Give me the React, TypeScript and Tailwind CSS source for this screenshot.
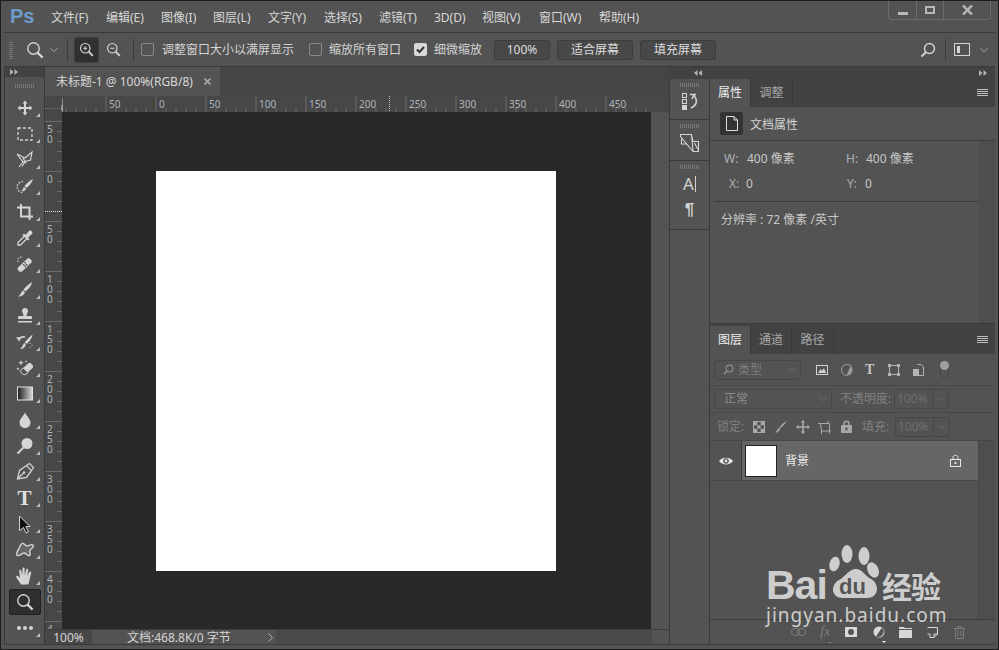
import React from "react";

const C = "#d4d4d4";

function Ic({ s = 20, children, vb = 20 }: { s?: number; vb?: number; children: React.ReactNode }) {
  return (
    <svg width={s} height={s} viewBox={`0 0 ${vb} ${vb}`} fill="none" className="block shrink-0">
      {children}
    </svg>
  );
}

function ZoomIcon({ mark, s = 18 }: { mark?: "+" | "-"; s?: number }) {
  return (
    <Ic s={s} vb={18}>
      <circle cx="7.5" cy="7.5" r="5.7" stroke={C} strokeWidth="1.4" />
      <path d="M11.6 11.6 L16.6 16.6" stroke={C} strokeWidth="2.2" />
      {mark && <path d="M5 7.5 H10" stroke={C} strokeWidth="1.2" />}
      {mark === "+" && <path d="M7.5 5 V10" stroke={C} strokeWidth="1.2" />}
    </Ic>
  );
}

const tools: React.ReactNode[] = [
  <Ic key="move"><path d="M10 2.5 L12.6 5.4 H11 V9 H14.6 V7.4 L17.5 10 L14.6 12.6 V11 H11 V14.6 H12.6 L10 17.5 L7.4 14.6 H9 V11 H5.4 V12.6 L2.5 10 L5.4 7.4 V9 H9 V5.4 H7.4 Z" fill={C} /></Ic>,
  <Ic key="marquee"><rect x="3" y="4" width="14" height="12" stroke={C} strokeWidth="1.3" strokeDasharray="3 2" /></Ic>,
  <Ic key="lasso"><path d="M2 4 L10 8 L17 2 L15.5 10 L8 12 L2 4 M8 12 L4 17 M10 11.5 L7 16.5 M8 8 L11 13.5" stroke={C} strokeWidth="1.2" /></Ic>,
  <Ic key="quick">
    <path d="M8 5.5 A5.5 5.5 0 1 0 7.5 16.5" stroke={C} strokeWidth="1.4" strokeDasharray="1.5 1.5" />
    <path d="M18 3 C17 7 14 10 11.5 12 L9.5 10 C12 7 15 4.5 18 3 Z M9 10.8 L11 12.7 C10 15 8 15.5 6.5 15 C8 14 8 12 9 10.8 Z" fill={C} />
  </Ic>,
  <Ic key="crop"><path d="M2 5.5 H14.5 V14.5 H6 V2 M14.5 14.5 V18 M14.5 14.5 H18" stroke={C} strokeWidth="2" /></Ic>,
  <Ic key="dropper"><path d="M3 17 L3 14.5 L10 7.5 L12.5 10 L5.5 17 Z" stroke={C} strokeWidth="1.3" /><path d="M9 5.5 L10.5 7 L14 3 C15.5 1.5 18.5 4.5 17 6 L13 9.5 L14.5 11 L13 12.5 L7.5 7 Z" fill={C} /></Ic>,
  <Ic key="heal">
    <path d="M3 13.5 L12.5 4.5 C14 3 18 6.5 16.5 8.5 L7 17.5 C5 19 1.5 15.5 3 13.5 Z" fill={C} />
    <path d="M8 10 h1.5 v1.5 h-1.5 z M11 10 h1.5 v1.5 h-1.5 z M9.5 8 h1.5 v1.5 h-1.5 z M9.5 11.5 h1.5 v1.5 h-1.5 z" fill="#535353" />
    <path d="M3 8 A4 4 0 0 1 8 3" stroke={C} strokeWidth="1.1" strokeDasharray="1.4 1.4" />
  </Ic>,
  <Ic key="brush"><path d="M17.5 2 C16.5 5.5 13.5 9 10.5 11.5 L8.5 9.5 C11 6.5 14 3.5 17.5 2 Z M8 10.2 L10 12.2 C9 15.5 6 16.8 3 16.5 C5.2 15.2 6.5 11.8 8 10.2 Z" fill={C} /></Ic>,
  <Ic key="stamp"><path d="M10 2 C12 2 13.2 3.5 13 5 C12.8 7 11.5 8 11.5 10 H15.5 C16.5 10 17 10.6 17 11.5 V13 H3 V11.5 C3 10.6 3.5 10 4.5 10 H8.5 C8.5 8 7.2 7 7 5 C6.8 3.5 8 2 10 2 Z M3 15 H17 V16.5 H3 Z" fill={C} /></Ic>,
  <Ic key="history">
    <path d="M17.5 2.5 C17 6.5 14 10 11.5 12 L9.8 10.3 C12 7.5 15 4.5 17.5 2.5 Z M9.3 11 L11 12.8 C10 15.8 7.5 17.2 5 17 C7 15.5 8 12.5 9.3 11 Z" fill={C} />
    <path d="M10 5 C7 4.5 5 5.5 3.5 7" stroke={C} strokeWidth="1.5" /><path d="M1 5.5 L6 5 L4.5 9.5 Z" fill={C} />
    <path d="M15 11 v1 M17 13 v1 M15 15 v1" stroke={C} strokeWidth="1" />
  </Ic>,
  <Ic key="eraser">
    <path d="M6 12 L13 5.5 C14 4.5 15 4.5 16 5.5 L17.5 7 C18.3 8 18.3 9 17.5 10 L11 16 C10 17 8.5 17 7.5 16 L6 14.5 C5.2 13.7 5.2 12.8 6 12 Z" fill={C} />
    <path d="M8.2 10 L13.2 14.6 L11 16 C10 17 8.5 17 7.5 16 L6 14.5 C5.2 13.7 5.2 12.8 6 12 Z" fill="#535353" stroke={C} strokeWidth="1" />
    <path d="M6 2 l.8 2 2 .8 -2 .8 -.8 2 -.8 -2 -2 -.8 2 -.8 z M11 2 l.4 1 1 .4 -1 .4 -.4 1 -.4 -1 -1 -.4 1 -.4 z M3 9 l.5 1.2 1.2 .5 -1.2 .5 -.5 1.2 -.5 -1.2 -1.2 -.5 1.2 -.5 z" fill={C} />
  </Ic>,
  <Ic key="grad">
    <defs><linearGradient id="gr" x1="0" x2="1" y1="0" y2="0"><stop offset="0" stopColor="#1c1c1c" /><stop offset="1" stopColor="#d8d8d8" /></linearGradient></defs>
    <rect x="2.5" y="3" width="15" height="13" fill="url(#gr)" stroke="#e2e2e2" strokeWidth="1" />
  </Ic>,
  <Ic key="drop"><path d="M10 2.5 C11.5 6 15.5 9 15.5 12.5 C15.5 15.8 13 18 10 18 C7 18 4.5 15.8 4.5 12.5 C4.5 9 8.5 6 10 2.5 Z" fill={C} /></Ic>,
  <Ic key="dodge"><circle cx="12" cy="7.5" r="5.5" fill={C} /><path d="M8.5 11.5 L2.5 17.5" stroke={C} strokeWidth="2" /></Ic>,
  <Ic key="pen"><path d="M2.5 17 L4.5 8.5 L11.5 3.5 L16.5 8.5 L11.5 15.5 Z" stroke={C} strokeWidth="1.3" /><path d="M2.5 17 L8.5 11" stroke={C} strokeWidth="1.1" /><circle cx="9" cy="10.5" r="1.2" fill={C} /><path d="M12 3 L14.5 1.5 L18.5 5.5 L17 8" stroke={C} strokeWidth="1.2" /></Ic>,
  <span key="type" className="font-['Liberation_Serif',serif] text-[21px] leading-none font-bold text-[#e0e0e0]">T</span>,
  <Ic key="path"><path d="M4.5 2 L15 12.5 H10.8 L13.5 18 L11 19 L8.5 13.5 L4.5 16.5 Z" fill="#111" stroke={C} strokeWidth="1" /></Ic>,
  <Ic key="shape"><path d="M7 3.5 C9 2.5 10 6 12 6 C14 6 16 3.5 18 5 C19.5 6.5 16.5 9 15 10 C13.5 11 16 13 15 15 C13.5 17 11.5 13.5 9.5 13 C7 12.5 5 16.5 2.5 15.5 C0.5 14.5 2.5 11 3.5 9.5 C5 7.5 4.5 5 7 3.5 Z" stroke={C} strokeWidth="1.4" fill="#666" /></Ic>,
  <Ic key="hand"><path d="M6 18.5 C4.5 15.5 2.2 13.5 1.2 11 C.8 9.8 2.4 9 3.6 10.4 L5 12 L4.2 5 C4.1 3.6 6 3.4 6.3 4.8 L7.2 9.5 L7.5 2.6 C7.6 1.2 9.6 1.2 9.6 2.6 L9.8 9.5 L11.2 3.6 C11.5 2.2 13.4 2.6 13.2 4 L12.2 10 L14.4 6 C15 4.8 16.6 5.5 16.2 6.8 L14.6 13.5 C14.2 15.8 13.8 17 13.4 18.5 Z" fill={C} /></Ic>,
];

function Corner() {
  return <div className="absolute right-[4px] bottom-[4px] h-0 w-0 border-b-[4px] border-l-[4px] border-b-[#bcbcbc] border-l-transparent" />;
}

function Tool({ children, active }: { children: React.ReactNode; active?: boolean }) {
  return (
    <div className="relative flex h-[26px] w-[38px] items-center justify-center">
      {active && <div className="absolute inset-x-[3px] inset-y-0 rounded-[2px] border border-[#222] bg-[#2f2f2f]" />}
      <div className="relative flex h-[20px] w-[20px] items-center justify-center">{children}</div>
      {!active && <Corner />}
    </div>
  );
}

function Grip({ w = "w-[20px]" }: { w?: string }) {
  return <div className={`h-[4px] ${w} bg-[repeating-linear-gradient(90deg,#777_0,#777_1px,transparent_1px,transparent_2px)]`} />;
}

function Checkbox({ on }: { on?: boolean }) {
  return (
    <div className={`flex h-[13px] w-[13px] items-center justify-center rounded-[2px] border ${on ? "border-[#d8d8d8] bg-[#d8d8d8]" : "border-[#8a8a8a] bg-transparent"}`}>
      {on && (
        <svg width="11" height="11" viewBox="0 0 11 11" fill="none" className="block">
          <path d="M2 5.5 L4.5 8 L9 3" stroke="#333" strokeWidth="2" />
        </svg>
      )}
    </div>
  );
}

function OptBtn({ w, children }: { w: string; children: React.ReactNode }) {
  return <div className={`flex h-[20px] items-center justify-center rounded-[3px] border border-[#3c3c3c] bg-[#484848] text-[#dedede] ${w}`}>{children}</div>;
}

function Chevron({ c = "#a8a8a8", s = 8 }: { c?: string; s?: number }) {
  return (
    <svg width={s} height={s} viewBox="0 0 8 8" fill="none" className="block shrink-0">
      <path d="M0.5 2.2 L4 5.7 L7.5 2.2" stroke={c} strokeWidth="1" />
    </svg>
  );
}

function DoubleArrow({ left }: { left?: boolean }) {
  return (
    <svg width="8" height="6" viewBox="0 0 8 6" className="block">
      {left ? <path d="M0 3 L3.5 0 V6 Z M4.5 3 L8 0 V6 Z" fill="#b5b5b5" /> : <path d="M0 0 L3.5 3 L0 6 Z M4.5 0 L8 3 L4.5 6 Z" fill="#b5b5b5" />}
    </svg>
  );
}

function Hamburger() {
  return (
    <svg width="11" height="8" viewBox="0 0 11 8" className="block">
      <path d="M0 .5 H11 M0 2.5 H11 M0 4.5 H11 M0 6.5 H11" stroke="#bdbdbd" strokeWidth="1" />
    </svg>
  );
}

const menus = [
  ["文件(F)", "w-[55px]"],
  ["编辑(E)", "w-[55px]"],
  ["图像(I)", "w-[52px]"],
  ["图层(L)", "w-[55px]"],
  ["文字(Y)", "w-[56px]"],
  ["选择(S)", "w-[55px]"],
  ["滤镜(T)", "w-[55px]"],
  ["3D(D)", "w-[48px]"],
  ["视图(V)", "w-[57px]"],
  ["窗口(W)", "w-[60px]"],
  ["帮助(H)", "w-[50px]"],
];

function TitleBar() {
  return (
    <div className="flex h-[31px] shrink-0 items-start">
      <span className="ml-[6px] mt-[2px] w-[41px] font-['Liberation_Sans',sans-serif] text-[20px] leading-[26px] font-bold text-[#6d9ccb]">Ps</span>
      <div className="mt-[8px] flex text-[12px] leading-[17px] text-[#d8d8d8]">
        {menus.map(([t, w]) => (
          <div key={t} className={w}>{t}</div>
        ))}
      </div>
      <div className="mt-[-1px] ml-auto mr-[4px] flex h-[20px] w-[103px] rounded-b-[4px] border border-t-0 border-[#6c6c6c]">
        <div className="flex w-[28px] items-end justify-center border-r border-[#6c6c6c] pb-[4px]"><div className="h-[3px] w-[10px] bg-[#b8b8b8]" /></div>
        <div className="flex w-[27px] items-center justify-center border-r border-[#6c6c6c]"><div className="h-[8px] w-[10px] border-2 border-[#b8b8b8]" /></div>
        <div className="flex flex-1 items-center justify-center">
          <svg width="11" height="10" viewBox="0 0 11 10"><path d="M1 .5 L10 9.5 M10 .5 L1 9.5" stroke="#b8b8b8" strokeWidth="2.4" /></svg>
        </div>
      </div>
    </div>
  );
}

function OptionsBar() {
  return (
    <div className="flex h-[35px] shrink-0 items-center border-y border-[#393939] pr-[7px] text-[12px] text-[#d4d4d4]">
      <div className="ml-[5px] h-[18px] w-[4px] bg-[repeating-linear-gradient(0deg,#777_0,#777_1px,transparent_1px,transparent_2px)]" />
      <div className="ml-[13px]"><ZoomIcon /></div>
      <div className="ml-[6px]"><Chevron /></div>
      <div className="ml-[9px] h-[22px] w-px bg-[#3c3c3c]" />
      <div className="ml-[6px] flex h-[26px] w-[25px] items-center justify-center rounded-[3px] border border-[#3f3f3f] bg-[#303030]"><ZoomIcon mark="+" s={15} /></div>
      <div className="ml-[7px]"><ZoomIcon mark="-" s={15} /></div>
      <div className="ml-[12px] h-[22px] w-px bg-[#3c3c3c]" />
      <div className="ml-[7px]"><Checkbox /></div>
      <span className="ml-[8px] w-[132px]">调整窗口大小以满屏显示</span>
      <div className="ml-[15px]"><Checkbox /></div>
      <span className="ml-[7px] w-[72px]">缩放所有窗口</span>
      <div className="ml-[13px]"><Checkbox on /></div>
      <span className="ml-[7px] w-[48px]">细微缩放</span>
      <div className="ml-[12px]"><OptBtn w="w-[56px]">100%</OptBtn></div>
      <div className="ml-[7px]"><OptBtn w="w-[76px]">适合屏幕</OptBtn></div>
      <div className="ml-[7px]"><OptBtn w="w-[76px]">填充屏幕</OptBtn></div>
      <div className="ml-auto">
        <svg width="16" height="16" viewBox="0 0 16 16" fill="none" className="block"><circle cx="9.5" cy="6.5" r="5" stroke={C} strokeWidth="1.4" /><path d="M6 10 L1.5 14.5" stroke={C} strokeWidth="2" /></svg>
      </div>
      <div className="ml-[9px] h-[22px] w-px bg-[#3c3c3c]" />
      <div className="ml-[8px] flex h-[13px] w-[16px] items-center border border-[#d4d4d4] pl-[2px]"><div className="h-[7px] w-[3px] bg-[#d4d4d4]" /></div>
      <div className="ml-[10px]"><Chevron /></div>
    </div>
  );
}

function ToolBar() {
  return (
    <div className="flex w-[41px] shrink-0 flex-col items-center border-x border-[#393939]">
      <div className="flex h-[10px] w-full items-center bg-[#424242] pl-[5px]"><DoubleArrow /></div>
      <div className="flex h-[18px] items-center"><Grip /></div>
      {tools.map((t, i) => (
        <Tool key={i}>{t}</Tool>
      ))}
      <Tool active><ZoomIcon s={18} /></Tool>
      <Tool>
        <svg width="18" height="4" viewBox="0 0 18 4" className="block"><circle cx="3" cy="2" r="2" fill={C} /><circle cx="9" cy="2" r="2" fill={C} /><circle cx="15" cy="2" r="2" fill={C} /></svg>
      </Tool>
    </div>
  );
}

function HRuler() {
  const labels = [["50", 106], ["0", 156], ["50", 206], ["100", 256], ["150", 306], ["200", 356], ["250", 406], ["300", 456], ["350", 506], ["400", 556], ["450", 606]] as const;
  const ticks = [];
  for (let x = 66; x < 652; x += 10) ticks.push(x);
  return (
    <svg width="607" height="16" viewBox="45 0 607 16" className="block">
      {ticks.map((x) => (
        <path key={x} d={`M${x} ${(x - 6) % 50 === 0 ? 0 : 12} V16`} stroke="#6c6c6c" strokeWidth="1" />
      ))}
      <path d="M62.5 2 V16" stroke="#8a8a8a" />
      <path d="M45 12.5 H62" stroke="#777" strokeDasharray="1 1" />
      <path d="M62 9 V15" stroke="#c8c8c8" />
      <path d="M389.5 0 V16" stroke="#c8c8c8" strokeDasharray="1 1" />
      {labels.map(([t, x]) => (
        <text key={x} x={x + 3} y="12" fontSize="10" fontFamily="'Noto Sans',sans-serif" fill="#aeb4ba">{t}</text>
      ))}
    </svg>
  );
}

function VRuler() {
  const marks = ["50", "0", "50", "100", "150", "200", "250", "300", "350", "400", "4"];
  const ticks = [];
  for (let y = 121; y < 629; y += 10) ticks.push(y);
  return (
    <div className="relative h-full w-full overflow-hidden pt-[9px] pl-[2px]">
      <svg width="17" height="517" viewBox="45 112 17 517" className="absolute top-0 left-0 block">
        {ticks.map((y) => {
          const major = (y - 21) % 50 === 0;
          return <path key={y} d={`M${major ? 45 : 57} ${y + 0.5} H62`} stroke="#6c6c6c" strokeWidth="1" />;
        })}
        <path d="M45 211.5 H62" stroke="#d8d8d8" strokeDasharray="1 1" />
      </svg>
      {marks.map((m, i) => (
        <div key={i} className="relative h-[50px] pt-[3px]">
          <div className="w-[7px] text-[10px] leading-[10px] break-all text-[#aeb4ba]">{m}</div>
        </div>
      ))}
    </div>
  );
}

function Document() {
  return (
    <div className="flex w-[624px] shrink-0 flex-col">
      <div className="flex h-[29px] shrink-0 bg-[#454545]">
        <div className="flex w-[175px] items-center bg-[#535353] pl-[11px] text-[12px] text-[#d8d8d8]">
          <span>未标题-1 @ 100%(RGB/8)</span>
          <span className="ml-auto mr-[9px]">
            <svg width="7" height="7" viewBox="0 0 7 7" className="block"><path d="M.5 .5 L6.5 6.5 M6.5 .5 L.5 6.5" stroke="#a8a8a8" strokeWidth="1.6" /></svg>
          </span>
        </div>
      </div>
      <div className="h-[16px] shrink-0 bg-[#474747]"><HRuler /></div>
      <div className="flex h-[517px] shrink-0">
        <div className="w-[17px] shrink-0 bg-[#474747]"><VRuler /></div>
        <div className="flex w-[589px] shrink-0 items-start justify-start bg-[#282828] pt-[59px] pl-[94px]">
          <div className="h-[400px] w-[400px] bg-white" />
        </div>
        <div className="flex-1 bg-[#535353]" />
      </div>
      <div className="flex h-[16px] shrink-0 items-center border-t border-[#3c3c3c] text-[12px] text-[#d4d4d4]">
        <div className="flex h-full w-[47px] items-center justify-center bg-[#474747]">100%</div>
        <div className="flex h-full w-[184px] items-center pl-[35px]">
          <span className="w-[141px]">文档:468.8K/0 字节</span>
          <svg width="5" height="9" viewBox="0 0 5 9" fill="none" className="block"><path d="M.5 .5 L4.5 4.5 L.5 8.5" stroke="#b5b5b5" /></svg>
        </div>
        <div className="h-full w-[376px] bg-[#4a4a4a]" />
      </div>
    </div>
  );
}

function DockGroup({ h, children }: { h: string; children: React.ReactNode }) {
  return (
    <div className={`flex flex-col items-center border-b border-[#393939] pt-[4px] ${h}`}>
      <Grip />
      <div className="flex flex-1 flex-col items-center">{children}</div>
    </div>
  );
}

function Dock() {
  return (
    <div className="flex w-[41px] shrink-0 flex-col border-x border-[#393939]">
      <DockGroup h="h-[41px]">
        <div className="mt-[6px]">
          <svg width="16" height="18" viewBox="0 0 16 18" fill="none" className="block">
            <rect x=".5" y=".5" width="4" height="4" stroke={C} /><rect x=".5" y="6.5" width="4" height="4" stroke={C} /><rect x="0" y="12" width="5" height="5" fill={C} />
            <path d="M8 1.5 H14 M11 1.5 C14 4 15 8 14 10 C13.5 12.5 11 14 9 15 M12 2 L10 6" stroke={C} strokeWidth="1.6" />
          </svg>
        </div>
      </DockGroup>
      <DockGroup h="h-[41px]">
        <div className="mt-[5px]">
          <svg width="20" height="20" viewBox="0 0 20 20" fill="none" className="block">
            <path d="M.5 1.5 H11.5 L13 8.5 H18.5 V18.5 H13 L.5 3.5 Z M11.5 1.5 L13 18 M1.5 6 V11 L6.5 11 M14.5 10 L18 16.5" stroke={C} strokeWidth="1.1" />
          </svg>
        </div>
      </DockGroup>
      <DockGroup h="h-[69px]">
        <div className="mt-[5px] flex items-center font-['Noto_Sans',sans-serif] text-[17px] leading-[20px] text-[#d4d4d4]">A<div className="ml-px h-[16px] w-px bg-[#d4d4d4]" /></div>
        <div className="mt-[6px] font-['Liberation_Sans',sans-serif] text-[17px] leading-[20px] font-bold text-[#d4d4d4]">¶</div>
      </DockGroup>
    </div>
  );
}

function Tabs({ items }: { items: [string, string][] }) {
  return (
    <div className="flex h-[28px] shrink-0 items-stretch bg-[#424242] pr-[7px]">
      {items.map(([t, w], i) => (
        <div key={t} className={`flex items-center justify-center border-r border-[#393939] ${w} ${i === 0 ? "bg-[#535353] text-[#eeeeee]" : "text-[#a8a8a8]"}`}>{t}</div>
      ))}
      <div className="ml-auto self-center"><Hamburger /></div>
    </div>
  );
}

function Properties() {
  return (
    <div className="flex h-[245px] shrink-0 flex-col border-b border-[#393939]">
      <Tabs items={[["属性", "w-[41px]"], ["调整", "w-[42px]"]]} />
      <div className="flex h-[34px] shrink-0 items-center border-b border-[#3c3c3c] pl-[10px]">
        <div className="flex h-[23px] w-[23px] items-center justify-center rounded-[2px] bg-[#333]">
          <svg width="12" height="15" viewBox="0 0 12 15" fill="none" className="block"><path d="M.5 .5 H8 L11.5 4 V14.5 H.5 Z M8 .5 V4 H11.5" stroke="#e0e0e0" /></svg>
        </div>
        <span className="mt-[3px] ml-[7px] text-[#d4d4d4]">文档属性</span>
      </div>
      <div className="flex flex-1">
        <div className="flex-1 pt-[5px] text-[#c8c8c8]">
          <div className="grid h-[25px] grid-cols-[136px_1fr] items-center">
            <div className="flex pl-[14px]"><span className="w-[23px] text-[#a9b2bb]">W:</span><span>400 像素</span></div>
            <div className="flex"><span className="w-[20px] text-[#a9b2bb]">H:</span><span>400 像素</span></div>
          </div>
          <div className="grid h-[25px] grid-cols-[136px_1fr] items-center">
            <div className="flex pl-[19px]"><span className="w-[17px] text-[#a9b2bb]">X:</span><span>0</span></div>
            <div className="flex pl-[1px]"><span className="w-[18px] text-[#a9b2bb]">Y:</span><span>0</span></div>
          </div>
          <div className="mt-[5px] ml-[4px] h-px bg-[#3c3c3c]" />
          <div className="mt-[9px] ml-[11px] leading-[18px]">分辨率 : 72 像素 /英寸</div>
        </div>
        <div className="w-[16px] bg-[#4e4e4e]" />
      </div>
    </div>
  );
}

function Sel({ w, text, dim }: { w: string; text: string; dim?: boolean }) {
  return (
    <div className={`flex h-[20px] items-center rounded-[3px] border border-[#474747] pr-[4px] ${w} ${dim ? "text-[#7d7d7d]" : "text-[#8a8a8a]"}`}>
      <span className="flex-1 pl-[9px]">{text}</span>
      <Chevron c="#6e6e6e" />
    </div>
  );
}

function PctBox() {
  return (
    <div className="ml-[2px] flex h-[20px] w-[55px] items-center rounded-[3px] border border-[#474747] text-[#6f6f6f]">
      <span className="flex-1 pl-[2px]">100%</span>
      <div className="flex h-full w-[16px] items-center justify-center border-l border-[#474747]"><Chevron c="#6e6e6e" /></div>
    </div>
  );
}

function Caret({ c, pos }: { c: string; pos: string }) {
  return <div className={`absolute -bottom-[5px] h-0 w-0 border-x-[2px] border-t-[2px] border-x-transparent ${c} ${pos}`} />;
}

function Layers() {
  const dim = "#8c8c8c";
  return (
    <div className="flex min-h-0 flex-1 flex-col">
      <div className="h-[2px] shrink-0 bg-[#424242]" />
      <Tabs items={[["图层", "w-[41px]"], ["通道", "w-[41px]"], ["路径", "w-[42px]"]]} />
      <div className="flex h-[32px] shrink-0 items-center border-b border-[#474747] pl-[4px]">
        <div className="flex h-[20px] w-[87px] items-center rounded-[3px] border border-[#474747] pr-[4px] pl-[8px] text-[#7d7d7d]">
          <svg width="11" height="11" viewBox="0 0 11 11" fill="none" className="mr-[4px] block"><circle cx="6.5" cy="4.5" r="3.4" stroke={dim} strokeWidth="1.2" /><path d="M4 7 L1 10" stroke={dim} strokeWidth="1.6" /></svg>
          <span className="flex-1">类型</span>
          <Chevron c="#6e6e6e" />
        </div>
        <div className="ml-[15px]">
          <svg width="12" height="10" viewBox="0 0 12 10" fill="none" className="block"><rect x=".5" y=".5" width="11" height="9" stroke={C} /><path d="M2 8 L4.5 4 L6 6 L8 3 L10 8 Z" fill={C} /></svg>
        </div>
        <div className="ml-[13px]">
          <svg width="12" height="12" viewBox="0 0 12 12" className="block"><circle cx="6" cy="6" r="5.5" fill="#9b9b9b" /><path d="M6 .5 A5.5 5.5 0 0 0 6 11.5 L10 2 A5.5 5.5 0 0 0 6 .5 Z" fill="#535353" stroke="#9b9b9b" /></svg>
        </div>
        <span className="ml-[12px] font-['Liberation_Serif',serif] text-[14px] leading-none font-bold text-[#c4c4c4]">T</span>
        <div className="ml-[14px]">
          <svg width="12" height="12" viewBox="0 0 12 12" fill="none" className="block"><rect x="1.5" y="1.5" width="9" height="9" stroke="#b5b5b5" /><rect x="0" y="0" width="3" height="3" fill="#b5b5b5" /><rect x="9" y="0" width="3" height="3" fill="#b5b5b5" /><rect x="0" y="9" width="3" height="3" fill="#b5b5b5" /><rect x="9" y="9" width="3" height="3" fill="#b5b5b5" /></svg>
        </div>
        <div className="ml-[13px]">
          <svg width="11" height="12" viewBox="0 0 11 12" fill="none" className="block"><path d="M4.5 .5 H8 L10.5 3 V11.5 H4.5" stroke="#b5b5b5" /><rect x="0" y="5" width="6" height="7" fill="#b5b5b5" /></svg>
        </div>
        <div className="relative ml-[16px] h-[17px] w-[9px] rounded-full border border-[#474747]">
          <div className="absolute -top-[1px] -left-[1px] h-[9px] w-[9px] rounded-full bg-[#a0a0a0]" />
        </div>
      </div>
      <div className="flex h-[27px] shrink-0 items-center border-b border-[#474747] pl-[4px]">
        <Sel w="w-[118px]" text="正常" />
        <span className="ml-[8px] w-[52px] text-[#808080] whitespace-nowrap">不透明度:</span>
        <PctBox />
      </div>
      <div className="flex h-[27px] shrink-0 items-center pl-[7px] text-[#808080]">
        <span className="w-[36px]">锁定:</span>
        <svg width="12" height="12" viewBox="0 0 12 12" className="block"><rect x=".5" y=".5" width="11" height="11" fill="none" stroke="#a8a8a8" /><path d="M1 1 h3.3 v3.3 h-3.3 z M7.7 1 h3.3 v3.3 h-3.3 z M4.3 4.3 h3.3 v3.3 h-3.3 z M1 7.7 h3.3 v3.3 h-3.3 z M7.7 7.7 h3.3 v3.3 h-3.3 z" fill="#a8a8a8" /></svg>
        <div className="ml-[9px]">
          <svg width="14" height="14" viewBox="0 0 14 14" className="block"><path d="M13 1 C11 4 8 7 6.5 8 L5.5 7 C7 5 10 2.5 13 1 Z M5 7.5 L6.2 8.7 C5.5 11.5 3 13 1 12.5 C2.8 11.5 3.5 9 5 7.5 Z" fill="#a8a8a8" /></svg>
        </div>
        <div className="ml-[8px]">
          <svg width="14" height="14" viewBox="0 0 14 14" fill="#a8a8a8" className="block"><path d="M7 0 L9.2 2.6 H7.8 V6.2 H11.4 V4.8 L14 7 L11.4 9.2 V7.8 H7.8 V11.4 H9.2 L7 14 L4.8 11.4 H6.2 V7.8 H2.6 V9.2 L0 7 L2.6 4.8 V6.2 H6.2 V2.6 H4.8 Z" /></svg>
        </div>
        <div className="ml-[8px]">
          <svg width="14" height="14" viewBox="0 0 14 14" fill="none" className="block"><path d="M2.5 3.5 H11.5 V11 M2.5 3.5 L3.5 11 H13 M0 3.5 H2.5 M10 1 V3.5 M3.5 11 V14 M11.5 11 V13.5" stroke="#a8a8a8" /></svg>
        </div>
        <div className="ml-[9px]">
          <svg width="11" height="13" viewBox="0 0 11 13" className="block"><path d="M3 5 V3.5 C3 .5 8 .5 8 3.5 V5" fill="none" stroke="#a8a8a8" strokeWidth="1.4" /><rect x="0" y="5" width="11" height="8" rx="1" fill="#a8a8a8" /><rect x="4.5" y="7.5" width="2" height="3" fill="#535353" /></svg>
        </div>
        <span className="ml-[10px] w-[31px]">填充:</span>
        <PctBox />
      </div>
      <div className="flex min-h-0 flex-1 border-t border-[#474747]">
        <div className="flex-1 border-r border-[#474747]">
          <div className="flex h-[40px] border-b border-[#474747]">
            <div className="flex w-[31px] items-center justify-center">
              <svg width="14" height="10" viewBox="0 0 14 10" className="block"><path d="M0 5 C3 .5 11 .5 14 5 C11 9.5 3 9.5 0 5 Z" fill="#e8e8e8" /><circle cx="7" cy="5" r="2.8" fill="#535353" /><circle cx="7" cy="5" r="1.4" fill="#e8e8e8" /></svg>
            </div>
            <div className="flex flex-1 items-center border-l border-[#3c3c3c] bg-[#666666] pl-[3px]">
              <div className="h-[32px] w-[32px] border border-[#222] bg-white" />
              <span className="ml-[8px] text-[#eeeeee]">背景</span>
              <div className="ml-auto mr-[17px]">
                <svg width="11" height="13" viewBox="0 0 11 13" fill="none" className="block"><path d="M3 5 V3.5 C3 .5 8 .5 8 3.5 V5" stroke="#e8e8e8" /><rect x=".5" y="5.5" width="10" height="7" stroke="#e8e8e8" /><rect x="4.5" y="8" width="2" height="2" fill="#e8e8e8" /></svg>
              </div>
            </div>
          </div>
        </div>
        <div className="w-[16px] bg-[#4e4e4e]" />
      </div>
      <div className="flex h-[25px] shrink-0 items-center border-t border-[#3c3c3c] pl-[81px]">
        <svg width="15" height="8" viewBox="0 0 15 8" fill="none" className="block"><rect x=".5" y=".5" width="8" height="7" rx="3.5" stroke="#7d7d7d" /><rect x="6.5" y=".5" width="8" height="7" rx="3.5" stroke="#7d7d7d" /></svg>
        <span className="relative ml-[14px] w-[12px] font-['Liberation_Serif',serif] text-[14px] leading-none text-[#7d7d7d] italic">fx<Caret c="border-t-[#777]" pos="left-[8px]" /></span>
        <div className="ml-[13px] flex h-[10px] w-[12px] items-center justify-center bg-[#d8d8d8]"><div className="h-[6px] w-[6px] rounded-full bg-[#535353]" /></div>
        <div className="relative ml-[16px]">
          <svg width="12" height="12" viewBox="0 0 12 12" className="block"><circle cx="6" cy="6" r="5.5" fill="#d8d8d8" /><path d="M9 1.5 A5.5 5.5 0 0 1 3 10.5 Z" fill="#535353" /></svg>
          <Caret c="border-t-[#e8e8e8]" pos="left-[9px]" />
        </div>
        <div className="ml-[14px]">
          <svg width="13" height="11" viewBox="0 0 13 11" className="block"><path d="M0 0 H5 L6 1 H13 V2 H0 Z M0 3 H13 V11 H0 Z" fill="#d8d8d8" /></svg>
        </div>
        <div className="ml-[15px]">
          <svg width="11" height="11" viewBox="0 0 11 11" fill="none" className="block"><path d="M.5 .5 H10.5 V7 L7 10.5 H3 V7 H.5 M10.5 7 H7 V10.5" stroke="#d8d8d8" /></svg>
        </div>
        <div className="ml-[16px]">
          <svg width="11" height="13" viewBox="0 0 11 13" fill="none" className="block"><path d="M0 2.5 H11 M3.5 2.5 V.5 H7.5 V2.5 M1.5 2.5 V12.5 H9.5 V2.5 M4 4.5 V10.5 M7 4.5 V10.5" stroke="#7d7d7d" /></svg>
        </div>
      </div>
    </div>
  );
}

function Watermark() {
  return (
    <div className="pointer-events-none absolute top-[542px] left-[767px] h-[84px] w-[180px] text-[#cdcdcd]">
      <span className="absolute top-[18px] -left-[2px] font-['Liberation_Sans',sans-serif] text-[41px] leading-[48px] font-bold tracking-[-1px]">Bai</span>
      <svg width="54" height="58" viewBox="0 0 54 58" className="absolute top-0 left-[61px] block">
        <ellipse cx="5.5" cy="21" rx="5" ry="7.5" transform="rotate(15 5.5 21)" fill="#cdcdcd" />
        <ellipse cx="18" cy="11" rx="5.5" ry="9" fill="#cdcdcd" />
        <ellipse cx="35" cy="13" rx="5.5" ry="9" fill="#cdcdcd" />
        <ellipse cx="44" cy="27" rx="5.5" ry="8" transform="rotate(-25 44 27)" fill="#cdcdcd" />
        <path d="M27 26 C33 26 35 32 42 36 C51 41 50 55 38 55 H14 C2 55 1 42 10 37 C17 33 20 26 27 26 Z" fill="#cdcdcd" />
      </svg>
      <span className="absolute top-[32px] left-[71px] font-['Liberation_Sans',sans-serif] text-[22px] leading-[24px] font-bold text-[#555555]">du</span>
      <span className="absolute top-[24px] left-[114px] font-['Noto_Sans_CJK_SC',sans-serif] text-[30px] leading-[36px] font-bold tracking-[-1px]">经验</span>
      <span className="absolute top-[59px] -left-[2px] font-['Noto_Sans',sans-serif] text-[19px] leading-[26px] tracking-[1px] whitespace-nowrap">jingyan.baidu.com</span>
    </div>
  );
}

export default function App() {
  return (
    <div className="relative flex h-[650px] w-[999px] flex-col overflow-hidden border border-[#1d1d1d] bg-[#535353] px-[3px] pb-[2px] font-['Noto_Sans','Noto_Sans_CJK_SC',sans-serif] text-[12px]">
      <TitleBar />
      <OptionsBar />
      <div className="flex min-h-0 flex-1">
        <ToolBar />
        <Document />
        <div className="flex min-w-0 flex-1 flex-col">
          <div className="flex h-[12px] shrink-0 items-center justify-between bg-[#424242] pr-[8px] pl-[25px]">
            <DoubleArrow left />
            <DoubleArrow />
          </div>
          <div className="flex min-h-0 flex-1">
            <Dock />
            <div className="flex min-w-0 flex-1 flex-col">
              <Properties />
              <Layers />
            </div>
          </div>
        </div>
      </div>
      <div className="h-[3px] shrink-0 border-t border-[#393939]" />
      <Watermark />
    </div>
  );
}
